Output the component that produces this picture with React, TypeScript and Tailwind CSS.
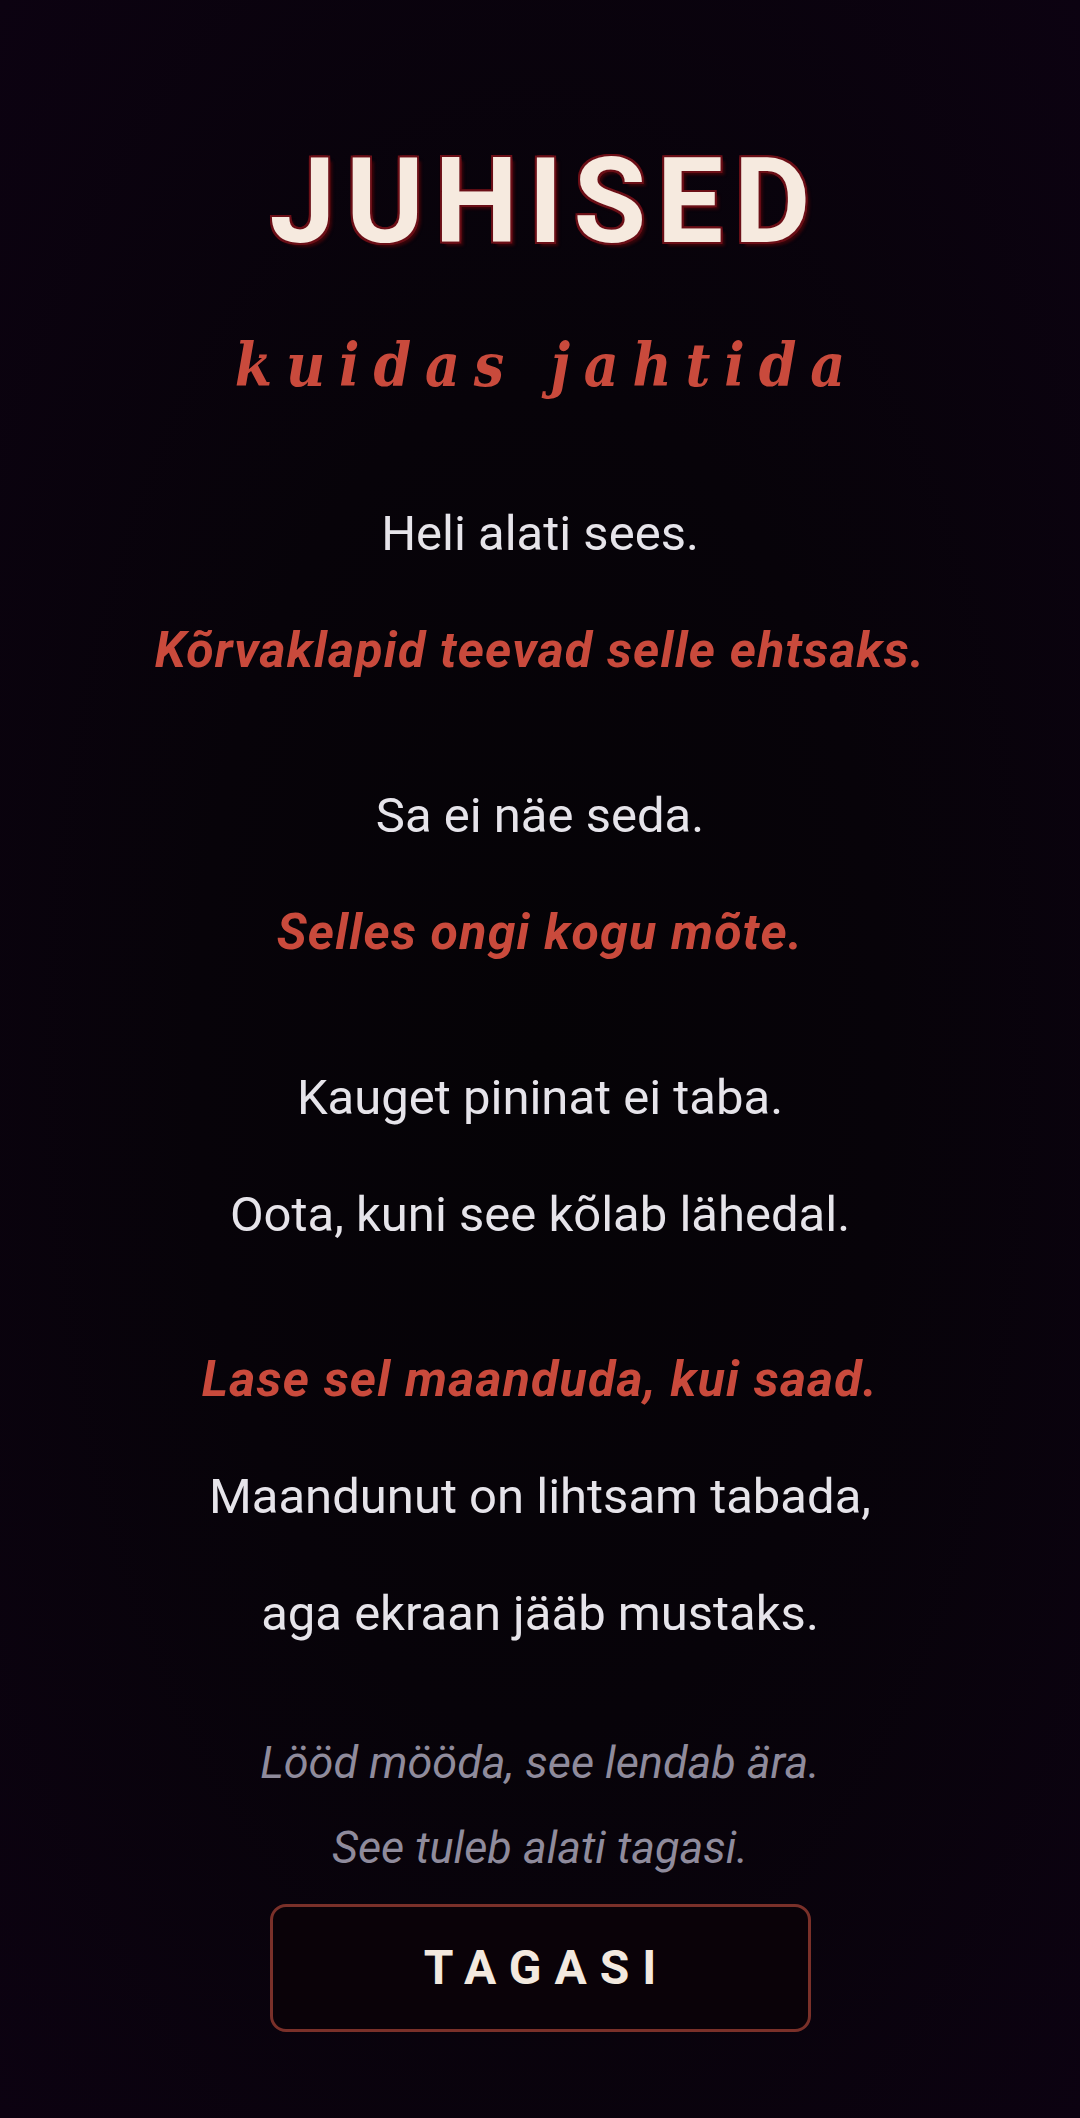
import React from "react";

const white = "text-[49px] leading-[117px] text-[#e6e4ea] font-normal";
const red = "text-[50px] leading-[117px] text-[#c94a3c] font-bold italic tracking-[0.025em]";
const gray = "text-[45px] leading-[85px] text-[#8f8b9c] italic font-normal";

export default function App() {
  return (
    <div
      className="w-[1080px] h-[2118px] overflow-hidden flex flex-col items-center text-center bg-[radial-gradient(ellipse_at_50%_50%,#050306_0%,#070309_45%,#0c0211_100%)]"
      style={{ fontFamily: "Roboto, 'Noto Sans', sans-serif" }}
    >
      <h1
        className="mt-[143px] text-[118px] leading-none font-bold tracking-[0.09em] text-[#f6eadf] pl-[0.09em]"
        style={{
          textShadow:
            "2px 0 0 #6b0f17, -2px 0 0 #6b0f17, 0 2px 0 #6b0f17, 0 -2px 0 #6b0f17, 2px 2px 0 #6b0f17, -2px -2px 0 #6b0f17, 2px -2px 0 #6b0f17, -2px 2px 0 #6b0f17, 4px 4px 3px #3a050a",
        }}
      >
        JUHISED
      </h1>
      <p
        className="mt-[74px] text-[60px] leading-none font-bold italic tracking-[0.23em] text-[#c94a3c] pl-[0.23em]"
        style={{ fontFamily: "'DejaVu Serif Condensed', 'DejaVu Serif', 'Liberation Serif', serif" }}
      >
        kuidas jahtida
      </p>

      <div className="mt-[80px] flex flex-col items-center">
        <p className={white}>Heli alati sees.</p>
        <p className={red}>Kõrvaklapid teevad selle ehtsaks.</p>
      </div>

      <div className="mt-[48px] flex flex-col items-center">
        <p className={white}>Sa ei näe seda.</p>
        <p className={red}>Selles ongi kogu mõte.</p>
      </div>

      <div className="mt-[48px] flex flex-col items-center">
        <p className={white}>Kauget pininat ei taba.</p>
        <p className={white}>Oota, kuni see kõlab lähedal.</p>
      </div>

      <div className="mt-[48px] flex flex-col items-center">
        <p className={red}>Lase sel maanduda, kui saad.</p>
        <p className={white}>Maandunut on lihtsam tabada,</p>
        <p className={white}>aga ekraan jääb mustaks.</p>
      </div>

      <div className="mt-[48px] flex flex-col items-center">
        <p className={gray}>Lööd mööda, see lendab ära.</p>
        <p className={gray}>See tuleb alati tagasi.</p>
      </div>

      <button className="mt-[14px] w-[541px] h-[128px] rounded-[16px] border-[3px] border-[#7a3029] bg-[#0a0208] flex items-center justify-center">
        <span className="text-[48px] font-bold tracking-[0.27em] pl-[0.27em] text-[#f3e9df] leading-none">
          TAGASI
        </span>
      </button>
    </div>
  );
}
